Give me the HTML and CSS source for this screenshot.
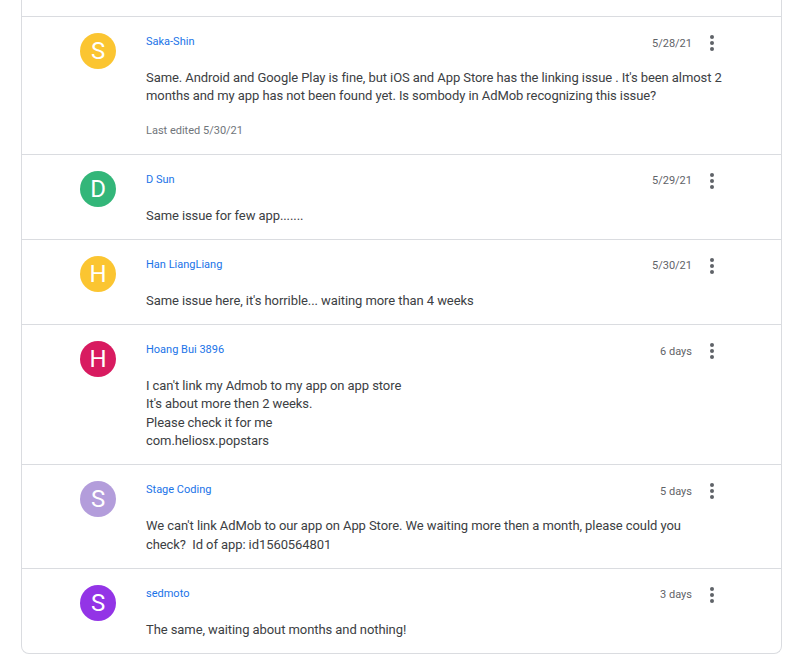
FILE: index.html
```html
<!DOCTYPE html>
<html>
<head>
<meta charset="utf-8">
<link rel="stylesheet" href="styles.css">
</head>
<body>
<div class="page">
  <div class="card">
    <div class="prev"></div>

    <div class="post">
      <div class="avatar c-yellow">S</div>
      <div class="main">
        <div class="head">
          <a class="name">Saka-Shin</a>
          <div class="meta"><span class="date">5/28/21</span><span class="more"><svg viewBox="0 0 24 24" width="24" height="24"><circle cx="12" cy="6" r="2"/><circle cx="12" cy="12" r="2"/><circle cx="12" cy="18" r="2"/></svg></span></div>
        </div>
        <div class="text">Same. Android and Google Play is fine, but iOS and App Store has the linking issue . It's been almost 2 months and my app has not been found yet. Is sombody in AdMob recognizing this issue?</div>
        <div class="edited">Last edited 5/30/21</div>
      </div>
    </div>

    <div class="post">
      <div class="avatar c-green">D</div>
      <div class="main">
        <div class="head">
          <a class="name">D Sun</a>
          <div class="meta"><span class="date">5/29/21</span><span class="more"><svg viewBox="0 0 24 24" width="24" height="24"><circle cx="12" cy="6" r="2"/><circle cx="12" cy="12" r="2"/><circle cx="12" cy="18" r="2"/></svg></span></div>
        </div>
        <div class="text">Same issue for few app.......</div>
      </div>
    </div>

    <div class="post">
      <div class="avatar c-yellow">H</div>
      <div class="main">
        <div class="head">
          <a class="name">Han LiangLiang</a>
          <div class="meta"><span class="date">5/30/21</span><span class="more"><svg viewBox="0 0 24 24" width="24" height="24"><circle cx="12" cy="6" r="2"/><circle cx="12" cy="12" r="2"/><circle cx="12" cy="18" r="2"/></svg></span></div>
        </div>
        <div class="text">Same issue here, it's horrible... waiting more than 4 weeks</div>
      </div>
    </div>

    <div class="post">
      <div class="avatar c-pink">H</div>
      <div class="main">
        <div class="head">
          <a class="name">Hoang Bui 3896</a>
          <div class="meta"><span class="date">6 days</span><span class="more"><svg viewBox="0 0 24 24" width="24" height="24"><circle cx="12" cy="6" r="2"/><circle cx="12" cy="12" r="2"/><circle cx="12" cy="18" r="2"/></svg></span></div>
        </div>
        <div class="text">I can't link my Admob to my app on app store<br>It's about more then 2 weeks.<br>Please check it for me<br>com.heliosx.popstars</div>
      </div>
    </div>

    <div class="post">
      <div class="avatar c-lilac">S</div>
      <div class="main">
        <div class="head">
          <a class="name">Stage Coding</a>
          <div class="meta"><span class="date">5 days</span><span class="more"><svg viewBox="0 0 24 24" width="24" height="24"><circle cx="12" cy="6" r="2"/><circle cx="12" cy="12" r="2"/><circle cx="12" cy="18" r="2"/></svg></span></div>
        </div>
        <div class="text">We can't link AdMob to our app on App Store. We waiting more then a month, please could you check?&nbsp; Id of app: id1560564801</div>
      </div>
    </div>

    <div class="post">
      <div class="avatar c-purple">S</div>
      <div class="main">
        <div class="head">
          <a class="name">sedmoto</a>
          <div class="meta"><span class="date">3 days</span><span class="more"><svg viewBox="0 0 24 24" width="24" height="24"><circle cx="12" cy="6" r="2"/><circle cx="12" cy="12" r="2"/><circle cx="12" cy="18" r="2"/></svg></span></div>
        </div>
        <div class="text">The same, waiting about months and nothing!</div>
      </div>
    </div>
  </div>
</div>
</body>
</html>
```

FILE: styles.css
```css
html, body {
  margin: 0;
  padding: 0;
  background: #ffffff;
}
body {
  font-family: Roboto, "Liberation Sans", Arial, sans-serif;
  color: #3c4043;
}
.page {
  padding: 0 18px 0 21px;
}
.card {
  width: 761px;
  box-sizing: border-box;
  border: 1px solid #dadce0;
  border-top: none;
  border-radius: 0 0 8px 8px;
  background: #fff;
}
.prev {
  height: 16px;
  border-bottom: 1px solid #dadce0;
}
.post {
  display: flex;
  padding: 16px 57px 14px 58px;
  border-bottom: 1px solid #dadce0;
}
.post:last-child {
  border-bottom: none;
}
.avatar {
  flex: none;
  width: 36px;
  height: 36px;
  border-radius: 50%;
  color: #fff;
  font-size: 24px;
  line-height: 36px;
  text-align: center;
  margin-right: 30px;
}
.c-yellow { background: #fbc531; }
.c-green { background: #33b679; }
.c-pink { background: #d81b60; }
.c-lilac { background: #b39ddb; }
.c-purple { background: #9334e6; }
.main {
  flex: 1;
  min-width: 0;
}
.head {
  display: flex;
  justify-content: space-between;
  align-items: center;
  height: 18px;
}
.name {
  font-size: 11px;
  line-height: 18px;
  color: #1a73e8;
}
.meta {
  display: flex;
  align-items: center;
  gap: 8px;
}
.date {
  font-size: 11px;
  color: #5f6368;
  padding-top: 2px;
}
.more {
  display: flex;
  width: 24px;
  height: 24px;
  margin-top: 2px;
}
.more svg {
  fill: #5f6368;
}
.text {
  margin-top: 18px;
  font-size: 13px;
  letter-spacing: -0.08px;
  line-height: 18.3px;
  color: #3c4043;
}
.edited {
  margin-top: 16px;
  font-size: 11px;
  line-height: 18px;
  color: #70757a;
}
```
